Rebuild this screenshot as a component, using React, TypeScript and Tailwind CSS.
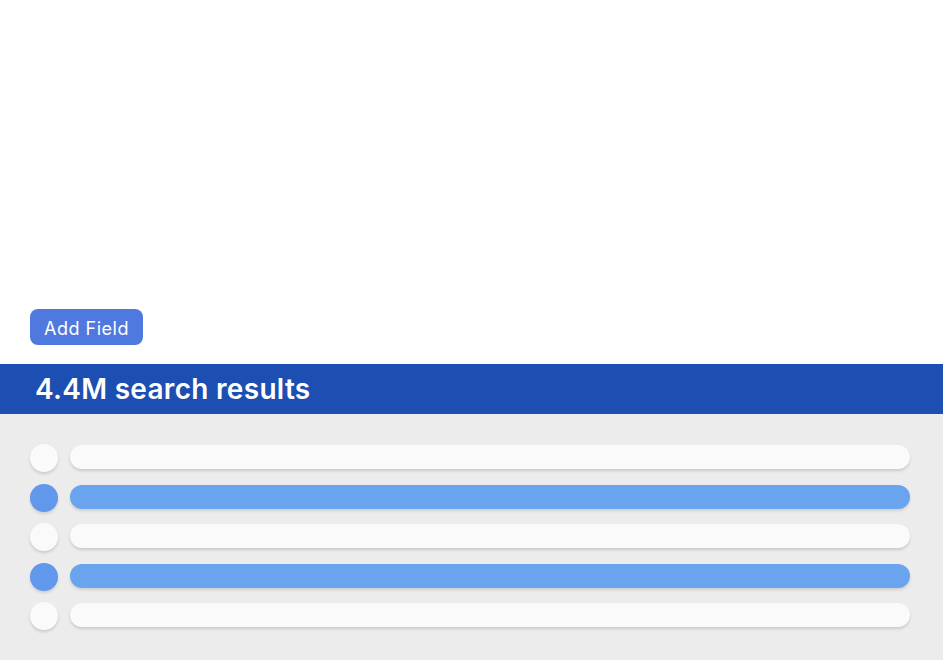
import React from 'react'

const rows = [false, true, false, true, false]

const App = () => {
    return (
        <div className="w-[943px] h-[660px] flex flex-col bg-white overflow-hidden" style={{ fontFamily: 'Inter, "Noto Sans", sans-serif' }}>
            <div className="h-[364px] flex items-end pl-[30px] pb-[19px]">
                <button className="h-[36px] w-[113px] rounded-[8px] bg-[#5079e0] text-white text-[18px] tracking-[0.5px] pt-[2px]">
                    Add Field
                </button>
            </div>
            <div className="h-[50px] bg-[#1c4fb1] flex items-center pl-[35px]">
                <h1 className="text-white text-[28px] font-semibold tracking-[0.3px] leading-none">4.4M search results</h1>
            </div>
            <div className="flex-1 bg-[#ececec] pt-[30px] pl-[30px] pr-[33px] flex flex-col gap-[11.5px]">
                {rows.map((active, i) => (
                    <div key={i} className="h-[28px] flex items-center gap-[12px]">
                        <div className={active
                            ? 'w-[28px] h-[28px] rounded-full bg-[#6198ec] shadow-[0_2px_3px_rgba(0,0,0,0.12)]'
                            : 'w-[28px] h-[28px] rounded-full bg-[#fafafa] shadow-[0_2px_3px_rgba(0,0,0,0.14)]'} />
                        <div className={active
                            ? 'flex-1 h-[24px] rounded-[12px] bg-[#6aa4ef] shadow-[0_2px_3px_rgba(0,0,0,0.12)] -mt-[2px]'
                            : 'flex-1 h-[24px] rounded-[12px] bg-[#fafafa] shadow-[0_2px_3px_rgba(0,0,0,0.14)] -mt-[2px]'} />
                    </div>
                ))}
            </div>
        </div>
    )
}

export default App
